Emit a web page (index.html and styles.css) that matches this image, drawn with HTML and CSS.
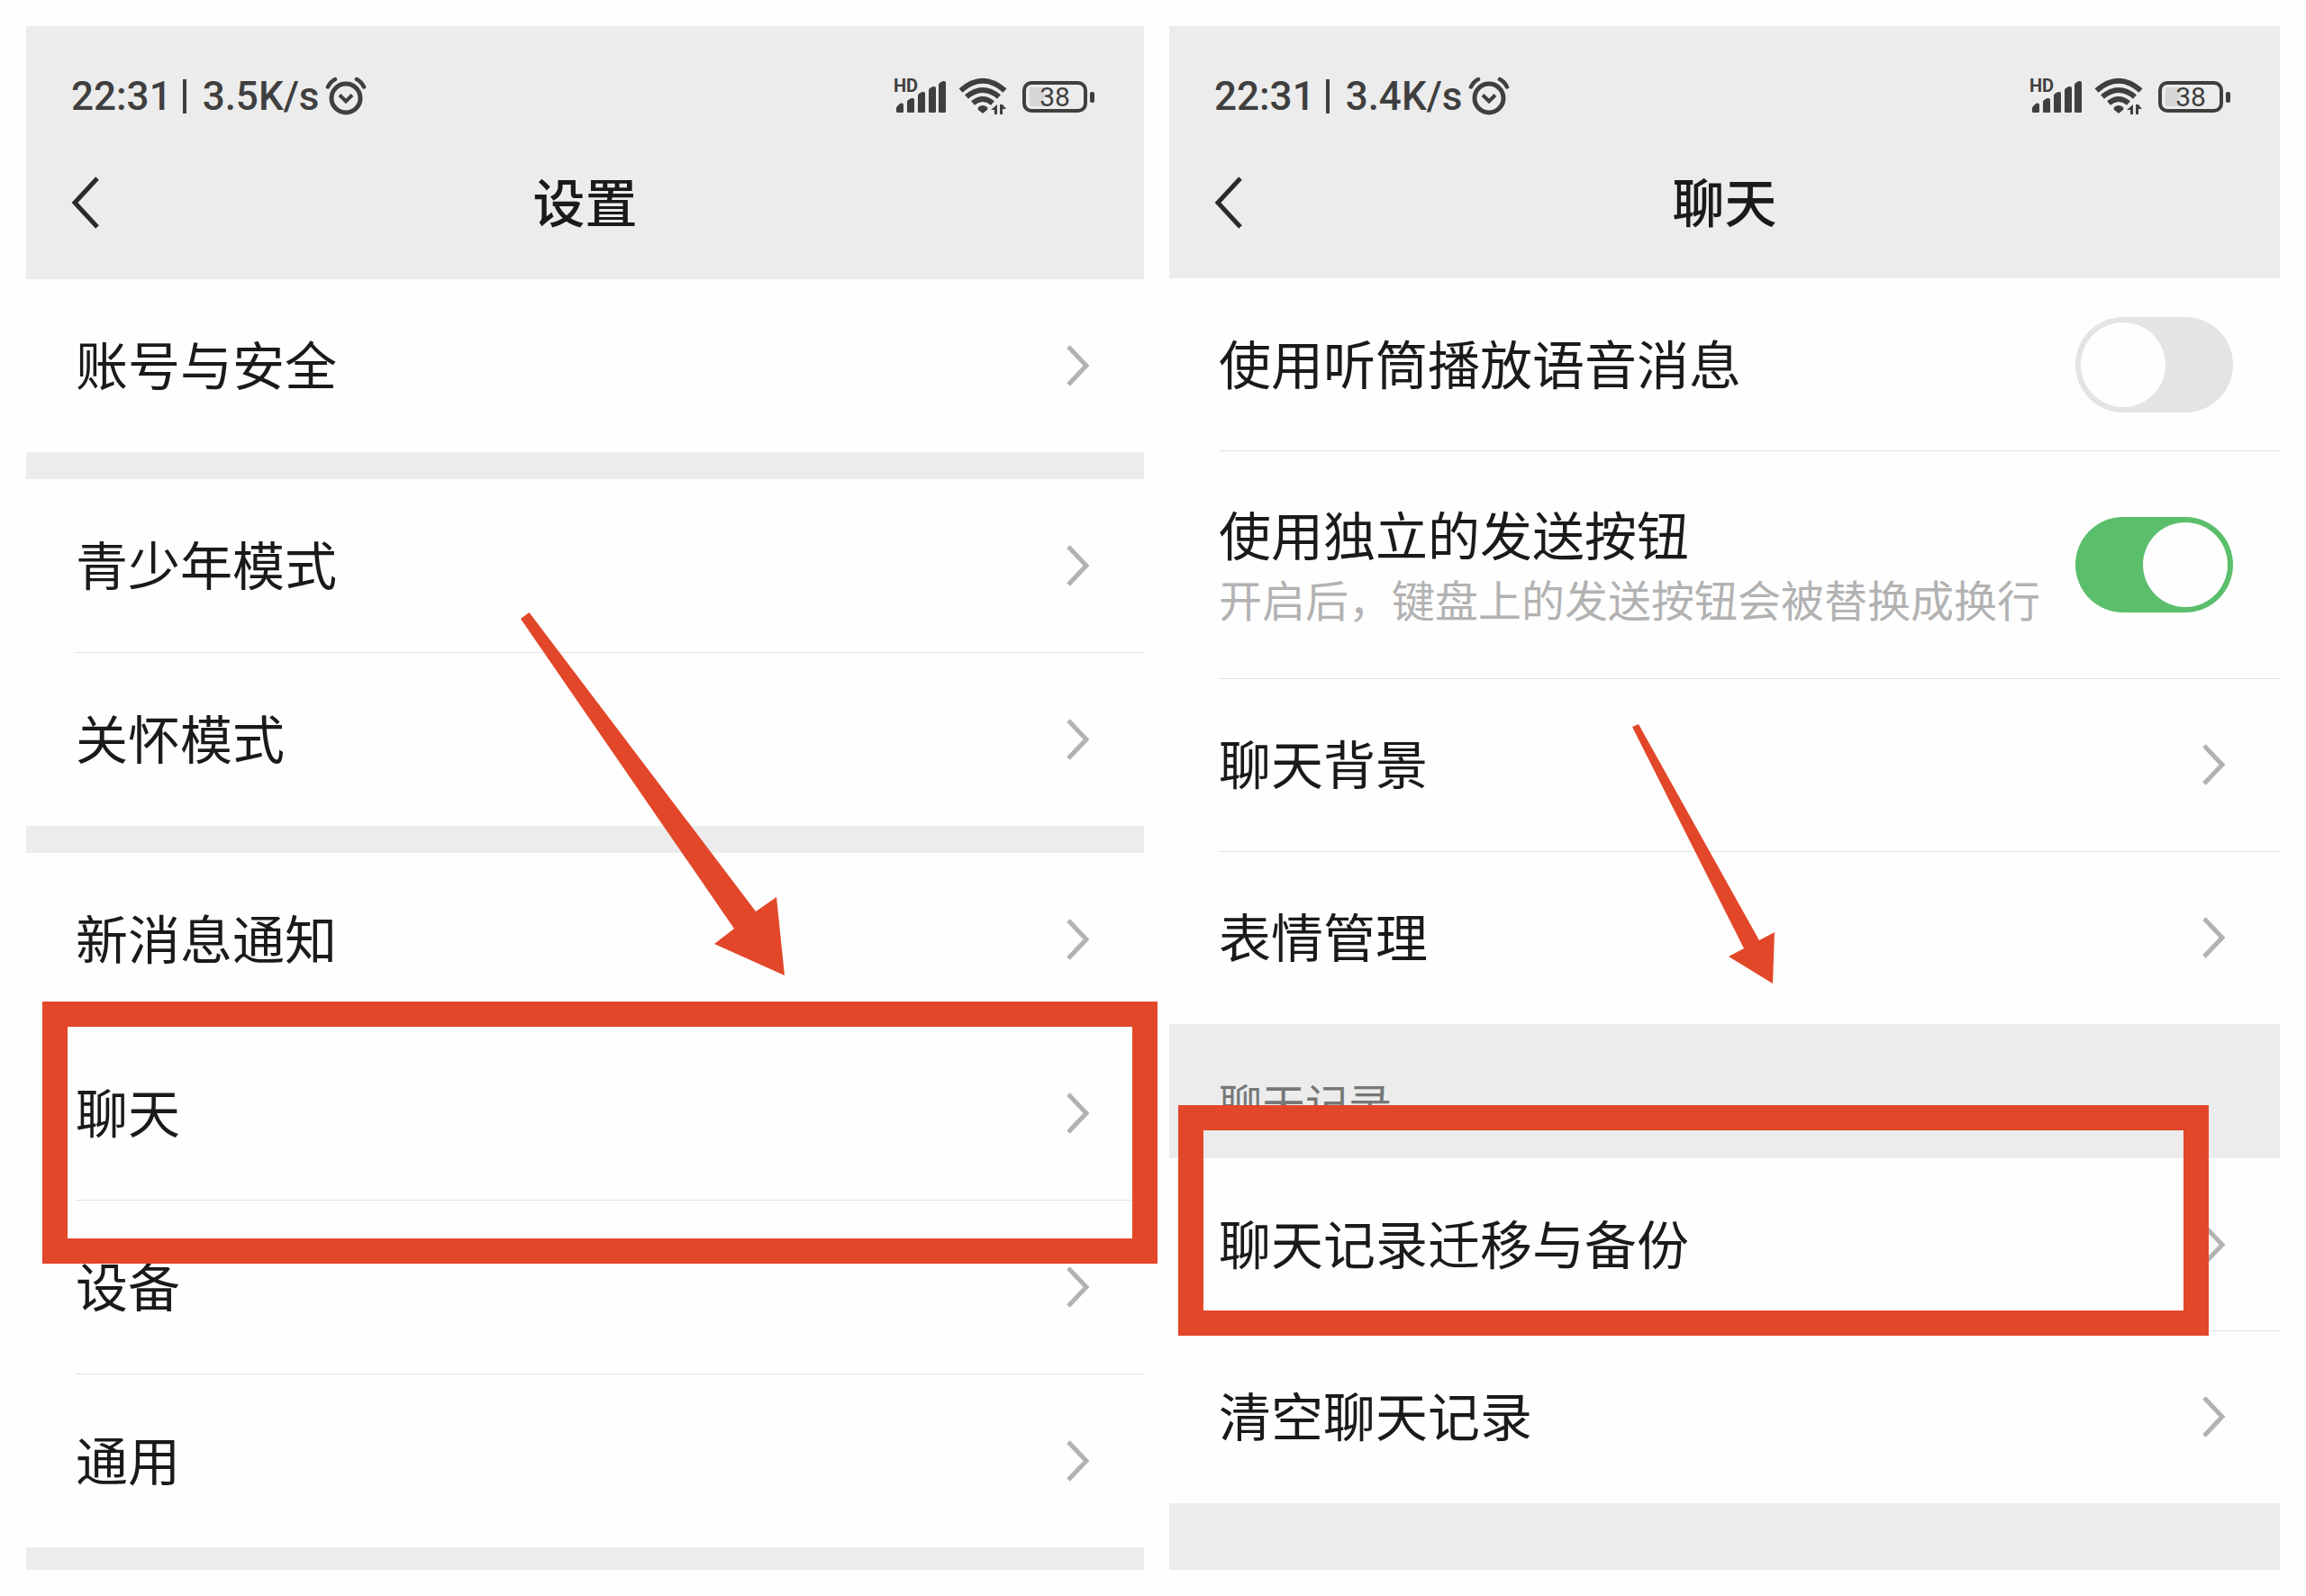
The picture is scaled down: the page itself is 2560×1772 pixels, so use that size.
FILE: index.html
```html
<!DOCTYPE html>
<html lang="zh-CN">

<head>
   <meta charset="UTF-8">
   <title>设置 - 聊天</title>
   <link rel="stylesheet" href="styles.css">
</head>

<body>

<!-- shared icons -->
<svg class="sprite" aria-hidden="true">
   <symbol id="alarm" viewBox="0 0 46 44">
      <circle cx="23" cy="24" r="16" fill="none" stroke="#3f3f3f" stroke-width="5"/>
      <path d="M16 20.500l7 7 7-7" fill="none" stroke="#3f3f3f" stroke-width="4"/>
      <path d="M3 11.500q3-6 8-8.500M43 11.500q-3-6-8-8.500" fill="none" stroke="#3f3f3f" stroke-width="4.500" stroke-linecap="round"/>
   </symbol>
   <symbol id="signal" viewBox="0 0 60 40">
      <path d="M3 37v-4q0-2 5-5.500h1q2 0 2 2V37q0 1-1 1H4q-1 0-1-1z"/>
      <path d="M15 37V26q0-2 5-4h1q2 0 2 2v13q0 1-1 1h-6q-1 0-1-1z"/>
      <path d="M27 37V19q0-2 5-4h1q2 0 2 2v20q0 1-1 1h-6q-1 0-1-1z"/>
      <path d="M39 37V13q0-2 5-4h1q2 0 2 2v26q0 1-1 1h-6q-1 0-1-1z"/>
      <path d="M50 37V7q0-2 5-4h1q2 0 2 2v32q0 1-1 1h-6q-1 0-1-1z"/>
   </symbol>
   <symbol id="wifi" viewBox="0 0 54 42">
      <g fill="none" stroke="#3f3f3f" stroke-width="6">
         <path d="M2.500 14.500Q27-7 51.500 14.500"/>
         <path d="M9 21.500q18-15 36 0"/>
         <path d="M16 28.500q11-9 22 0"/>
      </g>
      <path d="M22 33q5-4 10 0 1 1.500 0 3l-5 4-5-4q-1-1.500 0-3z"/>
      <path d="M43 30v11h-3v-5h-4zM46 41V30h3l4 5h-4v6z"/>
   </symbol>
   <symbol id="back" viewBox="0 0 34 60">
      <path d="M30 3L5 30l25 27" fill="none" stroke="#2a2a2a" stroke-width="5"/>
   </symbol>
   <symbol id="next" viewBox="0 0 26 46">
      <path d="M2 2l20 21L2 44" fill="none" stroke="#b2b2b2" stroke-width="5"/>
   </symbol>
</svg>

<main class="screens">

   <section class="screen settings">
      <header class="top">
         <div class="status">
            <span class="time">22:31</span>
            <span class="bar"></span>
            <span class="speed">3.5K/s</span>
            <svg class="alarm"><use href="#alarm"/></svg>
            <div class="signal">
               <span class="hd">HD</span>
               <svg><use href="#signal"/></svg>
            </div>
            <svg class="wifi"><use href="#wifi"/></svg>
            <span class="battery">38</span>
         </div>
         <div class="nav">
            <button class="back" aria-label="返回"><svg><use href="#back"/></svg></button>
            <h1>设置</h1>
         </div>
      </header>

      <nav class="group">
         <a class="row" href="#account"><span>账号与安全</span><svg class="next"><use href="#next"/></svg></a>
      </nav>
      <nav class="group">
         <a class="row" href="#teen"><span>青少年模式</span><svg class="next"><use href="#next"/></svg></a>
         <a class="row" href="#care"><span>关怀模式</span><svg class="next"><use href="#next"/></svg></a>
      </nav>
      <nav class="group">
         <a class="row" href="#notice"><span>新消息通知</span><svg class="next"><use href="#next"/></svg></a>
         <a class="row marked" href="#chat"><span>聊天</span><svg class="next"><use href="#next"/></svg></a>
         <a class="row" href="#device"><span>设备</span><svg class="next"><use href="#next"/></svg></a>
         <a class="row" href="#general"><span>通用</span><svg class="next"><use href="#next"/></svg></a>
      </nav>

      <svg class="arrow arrow-big" viewBox="0 0 294 404">
         <path d="M9.500 0L0 7l237 344-22 17 78 35-9-87-23 16z"/>
      </svg>
   </section>

   <section class="screen chat">
      <header class="top">
         <div class="status">
            <span class="time">22:31</span>
            <span class="bar"></span>
            <span class="speed">3.4K/s</span>
            <svg class="alarm"><use href="#alarm"/></svg>
            <div class="signal">
               <span class="hd">HD</span>
               <svg><use href="#signal"/></svg>
            </div>
            <svg class="wifi"><use href="#wifi"/></svg>
            <span class="battery">38</span>
         </div>
         <div class="nav">
            <button class="back" aria-label="返回"><svg><use href="#back"/></svg></button>
            <h1>聊天</h1>
         </div>
      </header>

      <div class="group">
         <label class="row" for="earpiece">
            <span>使用听筒播放语音消息</span>
            <input class="switch" type="checkbox" id="earpiece">
         </label>
         <label class="row tall" for="sendBtn">
            <span>使用独立的发送按钮<small>开启后，键盘上的发送按钮会被替换成换行</small></span>
            <input class="switch" type="checkbox" id="sendBtn" checked>
         </label>
         <a class="row" href="#background"><span>聊天背景</span><svg class="next"><use href="#next"/></svg></a>
         <a class="row" href="#stickers"><span>表情管理</span><svg class="next"><use href="#next"/></svg></a>
      </div>
      <h2>聊天记录</h2>
      <div class="group">
         <a class="row marked" href="#backup"><span>聊天记录迁移与备份</span><svg class="next"><use href="#next"/></svg></a>
         <a class="row" href="#clear"><span>清空聊天记录</span><svg class="next"><use href="#next"/></svg></a>
      </div>

      <svg class="arrow arrow-small" viewBox="0 0 158 288">
         <path d="M7 0L0 3l124 246-17 9 49 30 2-57-17 9z"/>
      </svg>
   </section>

</main>
</body>

</html>
```

FILE: styles.css
```css
*,
*::before,
*::after {
   box-sizing: border-box;
}

body {
   margin: 0;
   background: #fefefe;
   color: #1a1a1a;
   font-family: "Noto Sans CJK SC", sans-serif;
}

.sprite {
   display: none;
}

.screens {
   display: grid;
   grid-template-columns: 1241fr 1233fr;
   gap: 28px;
   min-height: 100vh;
   padding: 29px;
}

.screen {
   position: relative;
   background: #ececec;
}

.settings {
   --row: 192px;
}

.chat {
   --row: 191px;
}

/* header */
.top {
   height: 281px;
   padding-top: 48px;
}

.chat .top {
   height: 280px;
}

.status {
   display: flex;
   align-items: center;
   height: 60px;
   padding: 0 55px 0 50px;
   color: #3f3f3f;
   font-family: Roboto, sans-serif;
   font-size: 44px;
   font-weight: 500;
}

.status svg {
   fill: #3f3f3f;
}

.bar {
   width: 4px;
   height: 38px;
   margin: 0 18px 0 12px;
   background: #3f3f3f;
}

.alarm {
   width: 46px;
   height: 44px;
   margin-left: 6px;
}

.signal {
   position: relative;
   width: 60px;
   height: 40px;
   margin-left: auto;
}

.signal svg {
   display: block;
   width: 60px;
   height: 40px;
}

.hd {
   position: absolute;
   top: -2px;
   left: 0;
   font-size: 20px;
   font-weight: 700;
   line-height: 20px;
}

.wifi {
   width: 54px;
   height: 42px;
   margin: 0 17px 0 12px;
}

.battery {
   position: relative;
   width: 72px;
   height: 35px;
   margin-right: 8px;
   border: 4px solid #3f3f3f;
   border-radius: 10px;
   background: linear-gradient(#d6d6d6, #d6d6d6) 4px 3px / 16px 21px no-repeat;
   font-size: 30px;
   font-weight: 400;
   line-height: 28px;
   text-align: center;
}

.battery::after {
   content: "";
   position: absolute;
   top: 8px;
   right: -12px;
   width: 5px;
   height: 12px;
   border-radius: 2px;
   background: #3f3f3f;
}

.nav {
   display: grid;
   grid-template-columns: 100px 1fr 100px;
   align-items: center;
   height: 176px;
}

.back {
   height: 60px;
   padding: 0 0 0 49px;
   border: 0;
   background: none;
   text-align: left;
}

.back svg {
   display: block;
   width: 34px;
   height: 60px;
}

h1 {
   margin: 0;
   padding-bottom: 6px;
   font-size: 58px;
   font-weight: 500;
   line-height: 80px;
   text-align: center;
}

/* lists */
.group {
   background: #fefefe;
}

.group + .group {
   margin-top: 30px;
}

.row {
   position: relative;
   display: flex;
   align-items: center;
   justify-content: space-between;
   height: var(--row);
   padding: 0 60px 0 55px;
   color: inherit;
   font-size: 58px;
   line-height: 80px;
   text-decoration: none;
}

.row span {
   padding-bottom: 6px;
}

.row + .row {
   height: calc(var(--row) + 1px);
}

.row + .row::before {
   content: "";
   position: absolute;
   top: 0;
   left: 55px;
   right: 0;
   height: 1px;
   background: #e2e2e2;
}

.row + .row.tall {
   height: 253px;
}

.row:has(.switch) {
   padding-right: 52px;
}

small {
   display: block;
   color: #b2b2b2;
   font-size: 48px;
   line-height: 64px;
}

.next {
   width: 26px;
   height: 46px;
}

.switch {
   appearance: none;
   flex: none;
   width: 175px;
   height: 106px;
   margin: 0;
   padding: 6px;
   border-radius: 53px;
   background: #e4e4e4;
}

.switch::before {
   content: "";
   display: block;
   width: 94px;
   height: 94px;
   border-radius: 50%;
   background: #fefefe;
}

.switch:checked {
   background: #5abe6b;
}

.switch:checked::before {
   margin-left: auto;
}

h2 {
   display: flex;
   align-items: flex-end;
   height: 149px;
   margin: 0;
   padding: 0 55px 31px;
   color: #777;
   font-size: 48px;
   font-weight: 400;
   line-height: 64px;
}

/* red marks on top of the screens */
.marked::after {
   content: "";
   position: absolute;
   z-index: 1;
   top: -27px;
   left: 18px;
   right: -15px;
   height: 291px;
   border: 28px solid #e24729;
}

.chat .marked::after {
   top: -59px;
   left: 10px;
   right: 79px;
   height: 256px;
}

.arrow {
   position: absolute;
   fill: #e24729;
}

.arrow-big {
   top: 651px;
   left: 549px;
   width: 294px;
   height: 404px;
}

.arrow-small {
   top: 775px;
   left: 514px;
   width: 158px;
   height: 288px;
}
```
